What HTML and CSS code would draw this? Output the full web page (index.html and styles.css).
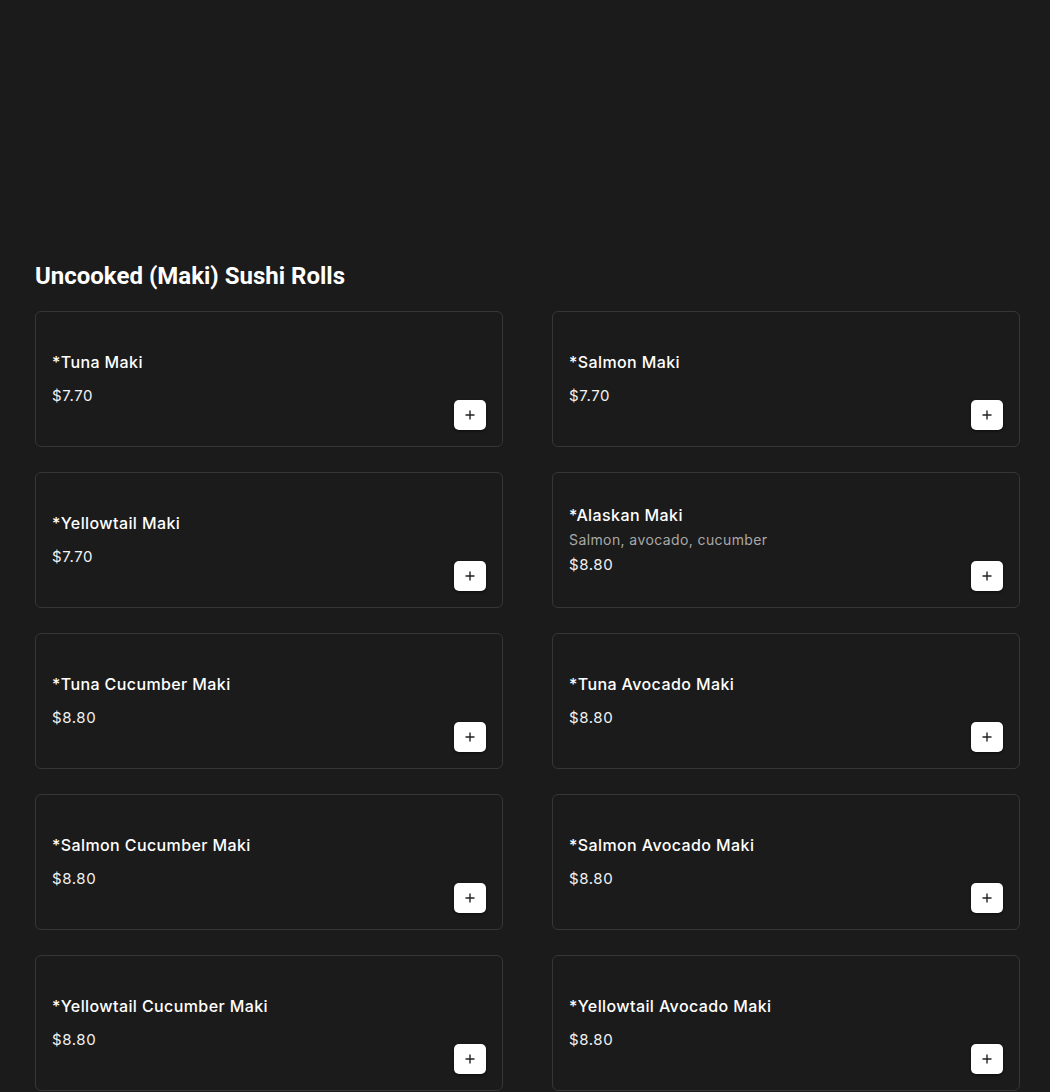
FILE: index.html
```html
<!DOCTYPE html>
<html>
<head>
<meta charset="utf-8">
<link rel="stylesheet" href="styles.css">
</head>
<body>
<main class="menu">
  <h2 class="section-title">Uncooked (Maki) Sushi Rolls</h2>
  <div class="grid">
    <div class="card"><div class="info"><div class="name">*Tuna Maki</div><div class="price">$7.70</div></div><button class="add"><svg viewBox="0 0 12 12" width="12" height="12"><path d="M6 1.5v9M1.5 6h9" stroke="#222" stroke-width="1.4" fill="none"/></svg></button></div>
    <div class="card"><div class="info"><div class="name">*Salmon Maki</div><div class="price">$7.70</div></div><button class="add"><svg viewBox="0 0 12 12" width="12" height="12"><path d="M6 1.5v9M1.5 6h9" stroke="#222" stroke-width="1.4" fill="none"/></svg></button></div>
    <div class="card"><div class="info"><div class="name">*Yellowtail Maki</div><div class="price">$7.70</div></div><button class="add"><svg viewBox="0 0 12 12" width="12" height="12"><path d="M6 1.5v9M1.5 6h9" stroke="#222" stroke-width="1.4" fill="none"/></svg></button></div>
    <div class="card"><div class="info"><div class="name">*Alaskan Maki</div><div class="desc">Salmon, avocado, cucumber</div><div class="price">$8.80</div></div><button class="add"><svg viewBox="0 0 12 12" width="12" height="12"><path d="M6 1.5v9M1.5 6h9" stroke="#222" stroke-width="1.4" fill="none"/></svg></button></div>
    <div class="card"><div class="info"><div class="name">*Tuna Cucumber Maki</div><div class="price">$8.80</div></div><button class="add"><svg viewBox="0 0 12 12" width="12" height="12"><path d="M6 1.5v9M1.5 6h9" stroke="#222" stroke-width="1.4" fill="none"/></svg></button></div>
    <div class="card"><div class="info"><div class="name">*Tuna Avocado Maki</div><div class="price">$8.80</div></div><button class="add"><svg viewBox="0 0 12 12" width="12" height="12"><path d="M6 1.5v9M1.5 6h9" stroke="#222" stroke-width="1.4" fill="none"/></svg></button></div>
    <div class="card"><div class="info"><div class="name">*Salmon Cucumber Maki</div><div class="price">$8.80</div></div><button class="add"><svg viewBox="0 0 12 12" width="12" height="12"><path d="M6 1.5v9M1.5 6h9" stroke="#222" stroke-width="1.4" fill="none"/></svg></button></div>
    <div class="card"><div class="info"><div class="name">*Salmon Avocado Maki</div><div class="price">$8.80</div></div><button class="add"><svg viewBox="0 0 12 12" width="12" height="12"><path d="M6 1.5v9M1.5 6h9" stroke="#222" stroke-width="1.4" fill="none"/></svg></button></div>
    <div class="card"><div class="info"><div class="name">*Yellowtail Cucumber Maki</div><div class="price">$8.80</div></div><button class="add"><svg viewBox="0 0 12 12" width="12" height="12"><path d="M6 1.5v9M1.5 6h9" stroke="#222" stroke-width="1.4" fill="none"/></svg></button></div>
    <div class="card"><div class="info"><div class="name">*Yellowtail Avocado Maki</div><div class="price">$8.80</div></div><button class="add"><svg viewBox="0 0 12 12" width="12" height="12"><path d="M6 1.5v9M1.5 6h9" stroke="#222" stroke-width="1.4" fill="none"/></svg></button></div>
  </div>
</main>
</body>
</html>
```
FILE: styles.css
```css
html, body {
  margin: 0;
  padding: 0;
  background: #1b1b1b;
}
.menu {
  padding: 261px 30px 0 35px;
  font-family: Inter, "Noto Sans", sans-serif;
  color: #fff;
}
.section-title {
  margin: 0 0 20px 0;
  font-family: Roboto, "Noto Sans", sans-serif;
  font-weight: 700;
  font-size: 24px;
  line-height: 30px;
  color: #fff;
}
.grid {
  display: grid;
  grid-template-columns: 1fr 1fr;
  column-gap: 49px;
  row-gap: 25px;
}
.card {
  box-sizing: border-box;
  height: 136px;
  border: 1px solid #363636;
  border-radius: 6px;
  padding: 16px;
  display: flex;
  justify-content: space-between;
}
.info {
  align-self: center;
  display: flex;
  flex-direction: column;
}
.name {
  font-size: 16px;
  font-weight: 500;
  line-height: 22px;
  letter-spacing: 0.4px;
  color: #fff;
}
.desc {
  margin-top: 4px;
  font-size: 14px;
  line-height: 20px;
  letter-spacing: 0.4px;
  color: #a9a9a9;
}
.price {
  margin-top: 12px;
  font-size: 15px;
  font-weight: 400;
  line-height: 22px;
  letter-spacing: 0.6px;
  color: #f2f2f2;
}
.desc + .price {
  margin-top: 4px;
}
.add {
  align-self: flex-end;
  width: 32px;
  height: 30px;
  padding: 0;
  border: none;
  border-radius: 5px;
  background: #fff;
  display: flex;
  align-items: center;
  justify-content: center;
  box-shadow: 0 1px 3px rgba(0,0,0,0.6);
  cursor: pointer;
}
```
